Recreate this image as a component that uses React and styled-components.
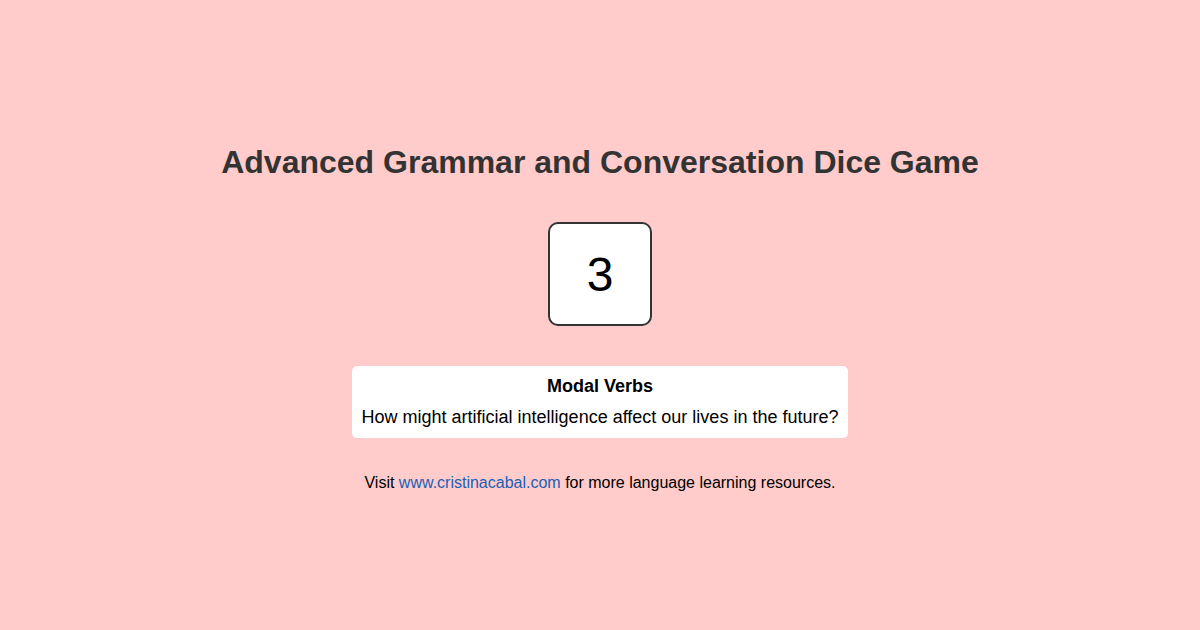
import React from "react";
import styled, { createGlobalStyle } from "styled-components";

const GlobalStyle = createGlobalStyle`
  html, body {
    margin: 0;
    padding: 0;
  }
  body {
    background-color: #ffcccb;
    font-family: "Liberation Sans", Arial, sans-serif;
    color: #000;
  }
`;

const Page = styled.div`
  box-sizing: border-box;
  min-height: 100vh;
  padding-top: 6px;
  display: flex;
  flex-direction: column;
  align-items: center;
  justify-content: center;
  text-align: center;
`;

const Title = styled.h1`
  margin: 0 0 41px;
  font-size: 32px;
  font-weight: bold;
  color: #333;
`;

const Die = styled.div`
  width: 100px;
  height: 100px;
  border: 2px solid #333;
  border-radius: 10px;
  background: #fff;
  display: flex;
  align-items: center;
  justify-content: center;
  font-size: 48px;
  margin-bottom: 40px;
`;

const Card = styled.div`
  display: inline-block;
  background: #fff;
  border-radius: 5px;
  padding: 10px;
`;

const Category = styled.div`
  font-size: 18px;
  font-weight: bold;
  margin-bottom: 10px;
`;

const Question = styled.div`
  font-size: 18px;
`;

const Footer = styled.p`
  margin: 36px 0 0;
  font-size: 16px;

  a {
    color: #1a5fb4;
    text-decoration: none;
  }
`;

const App = () => {
  return (
    <Page>
      <GlobalStyle />
      <Title>Advanced Grammar and Conversation Dice Game</Title>
      <Die>3</Die>
      <Card>
        <Category>Modal Verbs</Category>
        <Question>
          How might artificial intelligence affect our lives in the future?
        </Question>
      </Card>
      <Footer>
        Visit <a href="#">www.cristinacabal.com</a> for more language learning
        resources.
      </Footer>
    </Page>
  );
};

export default App;
